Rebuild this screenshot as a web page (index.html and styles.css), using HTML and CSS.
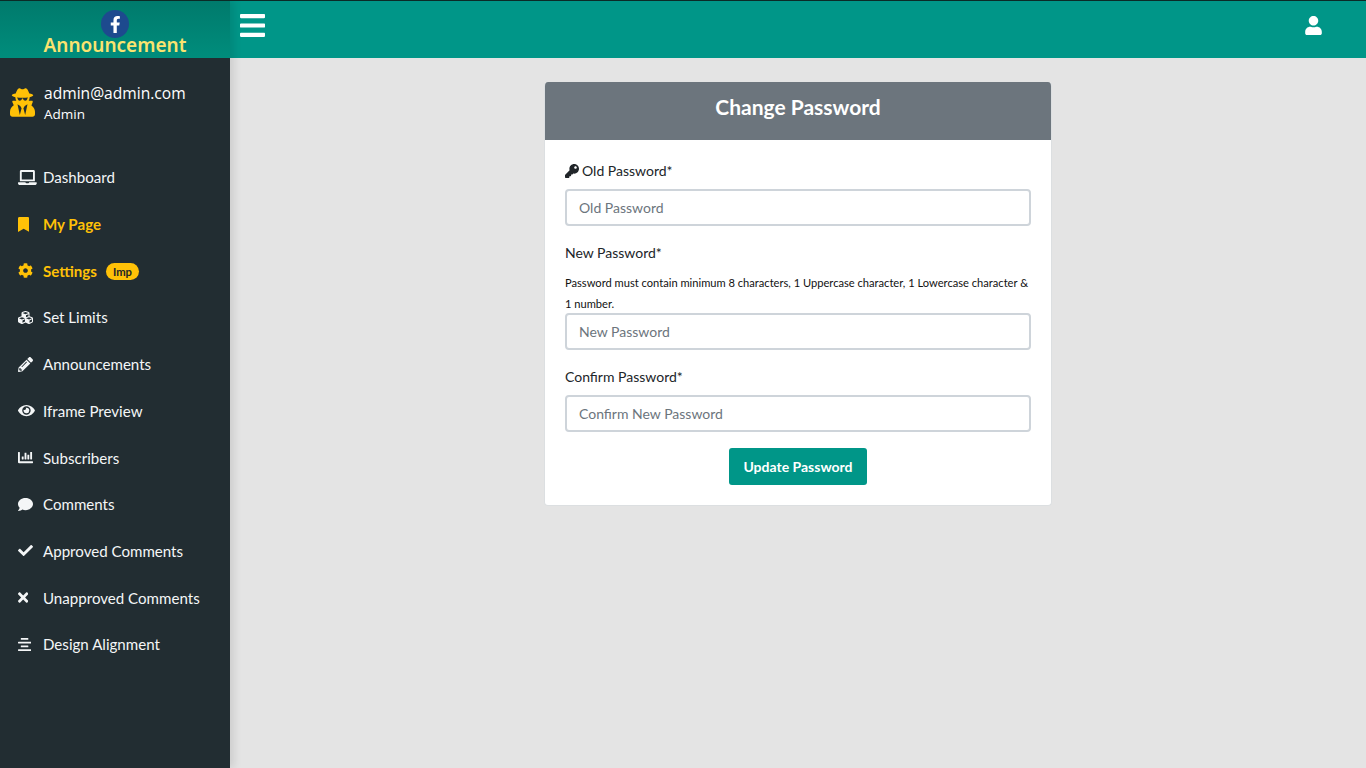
FILE: index.html
```html
<!DOCTYPE html>
<html lang="en">
<head>
<meta charset="utf-8">
<title>Change Password</title>
<link rel="stylesheet" href="styles.css">
</head>
<body>
<aside class="sidebar">
  <div class="logo">
    <span class="logo-badge"><svg viewBox="0 0 320 512" class="logo-f"><path d="M279.14 288l14.22-92.66h-88.91v-60.13c0-25.35 12.42-50.06 52.24-50.06h40.42V6.26S260.43 0 225.36 0c-73.22 0-121.08 44.38-121.08 124.72v70.62H22.89V288h81.39v224h100.17V288z"/></svg></span>
    <span class="logo-text">Announcement</span>
  </div>
  <div class="profile">
    <svg viewBox="0 0 448 512" class="profile-icon"><path d="M383.9 308.3l23.9-62.6c4-10.5-3.7-21.7-15-21.7h-58.5c11-18.9 17.8-40.6 17.8-64v-.3c39.2-7.8 64-19.1 64-31.7 0-13.3-27.3-25.1-70.1-33-9.2-32.8-27-65.8-40.6-82.8-9.5-11.9-25.9-15.6-39.5-8.8l-27.6 13.8c-9 4.5-19.6 4.5-28.6 0L182.1 3.4c-13.6-6.8-30-3.1-39.5 8.8-13.5 17-31.4 50-40.6 82.8-42.7 7.9-70 19.7-70 33 0 12.6 24.8 23.9 64 31.7v.3c0 23.4 6.8 45.1 17.8 64H56.3c-11.5 0-19.2 11.7-14.7 22.3l25.8 60.2C27.3 329.8 0 372.7 0 422.4v44.8C0 491.9 20.1 512 44.8 512h358.4c24.7 0 44.8-20.1 44.8-44.8v-44.8c0-48.4-25.8-90.4-64.1-114.1zM176 480l-41.6-192 49.6 32 24 40-32 120zm96 0l-32-120 24-40 49.6-32L272 480zm41.7-298.5c-3.9 11.9-7 24.6-16.5 33.4-10.1 9.3-48 22.4-64-25-2.8-8.4-15.4-8.4-18.3 0-17 50.2-56 32.4-64 25-9.5-8.8-12.7-21.5-16.5-33.4-.8-2.5-6.3-5.7-6.3-5.8v-10.8c28.3 3.6 61 5.8 96 5.8s67.7-2.1 96-5.8v10.8c-.1.1-5.6 3.2-6.4 5.8z"/></svg>
    <div class="profile-text">
      <div class="profile-mail">admin@admin.com</div>
      <div class="profile-role">Admin</div>
    </div>
  </div>
  <nav class="menu">
    <a class="item"><span class="ico"><svg viewBox="0 0 640 512"><path d="M624 416H381.54c-.74 19.81-14.71 32-32.74 32H288c-18.69 0-33.02-17.47-32.77-32H16c-8.8 0-16 7.2-16 16v16c0 35.2 28.8 64 64 64h512c35.2 0 64-28.8 64-64v-16c0-8.8-7.2-16-16-16zM576 48c0-26.4-21.6-48-48-48H112C85.6 0 64 21.6 64 48v336h512V48zm-64 272H128V64h384v256z"/></svg></span>Dashboard</a>
    <a class="item active"><span class="ico"><svg viewBox="0 0 384 512"><path d="M0 512V48C0 21.49 21.49 0 48 0h288c26.51 0 48 21.49 48 48v464L192 400 0 512z"/></svg></span>My Page</a>
    <a class="item active"><span class="ico"><svg viewBox="0 0 512 512"><path d="M487.4 315.7l-42.6-24.6c4.3-23.2 4.3-47 0-70.2l42.6-24.6c4.9-2.8 7.1-8.6 5.5-14-11.1-35.6-30-67.8-54.7-94.6-3.8-4.1-10-5.1-14.8-2.3L380.8 110c-17.9-15.4-38.5-27.3-60.8-35.1V25.8c0-5.6-3.9-10.5-9.4-11.7-36.7-8.2-74.3-7.8-109.2 0-5.5 1.2-9.4 6.1-9.4 11.7V75c-22.2 7.9-42.8 19.8-60.8 35.1L88.7 85.5c-4.9-2.8-11-1.9-14.8 2.3-24.7 26.7-43.6 58.9-54.7 94.6-1.7 5.4.6 11.2 5.5 14L67.3 221c-4.3 23.2-4.3 47 0 70.2l-42.6 24.6c-4.9 2.8-7.1 8.6-5.5 14 11.1 35.6 30 67.8 54.7 94.6 3.8 4.1 10 5.1 14.8 2.3l42.6-24.6c17.9 15.4 38.5 27.3 60.8 35.1v49.2c0 5.6 3.9 10.5 9.4 11.7 36.7 8.2 74.3 7.8 109.2 0 5.5-1.2 9.4-6.1 9.4-11.7v-49.2c22.2-7.9 42.8-19.8 60.8-35.1l42.6 24.6c4.9 2.8 11 1.9 14.8-2.3 24.7-26.7 43.6-58.9 54.7-94.6 1.5-5.5-.7-11.3-5.6-14.1zM256 336c-44.1 0-80-35.9-80-80s35.9-80 80-80 80 35.9 80 80-35.9 80-80 80z"/></svg></span>Settings<span class="badge">Imp</span></a>
    <a class="item"><span class="ico"><svg viewBox="0 0 512 512"><path d="M488.6 250.2L392 214V105.5c0-15-9.3-28.4-23.4-33.7l-100-37.5c-8.1-3.1-17.1-3.1-25.3 0l-100 37.5c-14.1 5.3-23.4 18.7-23.4 33.7V214l-96.6 36.2C9.3 255.5 0 268.9 0 283.9V394c0 13.6 7.7 26.1 19.9 32.2l100 50c10.1 5.1 22.1 5.1 32.2 0l103.9-52 103.9 52c10.1 5.1 22.1 5.1 32.2 0l100-50c12.2-6.1 19.9-18.6 19.9-32.2V283.9c0-15-9.3-28.4-23.4-33.7zM358 214.8l-85 31.9v-68.2l85-37v73.3zM154 104.1l102-38.2 102 38.2v.6l-102 41.4-102-41.4v-.6zm84 291.1l-85 42.5v-79.1l85-38.8v75.4zm0-112l-102 41.4-102-41.4v-.6l102-38.2 102 38.2v.6zm240 112l-85 42.5v-79.1l85-38.8v75.4zm0-112l-102 41.4-102-41.4v-.6l102-38.2 102 38.2v.6z"/></svg></span>Set Limits</a>
    <a class="item"><span class="ico"><svg viewBox="0 0 512 512"><path d="M497.9 142.1l-46.1 46.1c-4.7 4.7-12.3 4.7-17 0l-111-111c-4.7-4.7-4.7-12.3 0-17l46.1-46.1c18.7-18.7 49.1-18.7 67.9 0l60.1 60.1c18.8 18.7 18.8 49.1 0 67.9zM284.2 99.8L21.6 362.4.4 483.9c-2.9 16.4 11.4 30.6 27.8 27.8l121.5-21.3 262.6-262.6c4.7-4.7 4.7-12.3 0-17l-111-111c-4.8-4.7-12.4-4.7-17.1 0zM124.1 339.9c-5.5-5.5-5.5-14.3 0-19.8l154-154c5.5-5.5 14.3-5.5 19.8 0s5.5 14.3 0 19.8l-154 154c-5.5 5.5-14.3 5.5-19.8 0zM88 424h48v36.3l-64.5 11.3-31.1-31.1L51.7 376H88v48z"/></svg></span>Announcements</a>
    <a class="item"><span class="ico"><svg viewBox="0 0 576 512"><path d="M572.52 241.4C518.29 135.59 410.93 64 288 64S57.68 135.64 3.48 241.41a32.35 32.35 0 0 0 0 29.19C57.71 376.41 165.07 448 288 448s230.32-71.64 284.52-177.41a32.35 32.35 0 0 0 0-29.19zM288 400a144 144 0 1 1 144-144 143.93 143.93 0 0 1-144 144zm0-240a95.31 95.31 0 0 0-25.31 3.79 47.85 47.85 0 0 1-66.9 66.9A95.78 95.78 0 1 0 288 160z"/></svg></span>Iframe Preview</a>
    <a class="item"><span class="ico"><svg viewBox="0 0 512 512"><path d="M332.8 320h38.4c6.4 0 12.8-6.4 12.8-12.8V172.8c0-6.4-6.4-12.8-12.8-12.8h-38.4c-6.4 0-12.8 6.4-12.8 12.8v134.4c0 6.4 6.4 12.8 12.8 12.8zm96 0h38.4c6.4 0 12.8-6.4 12.8-12.8V76.8c0-6.4-6.4-12.8-12.8-12.8h-38.4c-6.4 0-12.8 6.4-12.8 12.8v230.4c0 6.4 6.4 12.8 12.8 12.8zm-288 0h38.4c6.4 0 12.8-6.4 12.8-12.8v-70.4c0-6.4-6.4-12.8-12.8-12.8h-38.4c-6.4 0-12.8 6.4-12.8 12.8v70.4c0 6.4 6.4 12.8 12.8 12.8zm96 0h38.4c6.4 0 12.8-6.4 12.8-12.8V108.8c0-6.4-6.4-12.8-12.8-12.8h-38.4c-6.4 0-12.8 6.4-12.8 12.8v198.4c0 6.4 6.4 12.8 12.8 12.8zM496 384H64V80c0-8.84-7.16-16-16-16H16C7.16 64 0 71.16 0 80v336c0 17.67 14.33 32 32 32h464c8.84 0 16-7.16 16-16v-32c0-8.84-7.16-16-16-16z"/></svg></span>Subscribers</a>
    <a class="item"><span class="ico"><svg viewBox="0 0 512 512"><path d="M256 32C114.6 32 0 125.1 0 240c0 49.6 21.4 95 57 130.7C44.5 421.1 2.7 466 2.2 466.5c-2.2 2.3-2.8 5.7-1.5 8.7S4.8 480 8 480c66.3 0 116-31.8 140.6-51.4 32.7 12.3 69 19.4 107.4 19.4 141.4 0 256-93.1 256-208S397.4 32 256 32z"/></svg></span>Comments</a>
    <a class="item"><span class="ico"><svg viewBox="0 0 512 512"><path d="M173.898 439.404l-166.4-166.4c-9.997-9.997-9.997-26.206 0-36.204l36.203-36.204c9.997-9.998 26.207-9.998 36.204 0L192 312.69 432.095 72.596c9.997-9.997 26.207-9.997 36.204 0l36.203 36.204c9.997 9.997 9.997 26.206 0 36.204l-294.4 294.401c-9.998 9.997-26.207 9.997-36.204-.001z"/></svg></span>Approved Comments</a>
    <a class="item"><span class="ico"><svg viewBox="0 0 352 512"><path d="M242.72 256l100.07-100.07c12.28-12.28 12.28-32.19 0-44.48l-22.24-22.24c-12.28-12.28-32.19-12.28-44.48 0L176 189.28 75.93 89.21c-12.28-12.28-32.19-12.28-44.48 0L9.21 111.45c-12.28 12.28-12.28 32.19 0 44.48L109.28 256 9.21 356.07c-12.28 12.28-12.28 32.19 0 44.48l22.24 22.24c12.28 12.28 32.2 12.28 44.48 0L176 322.72l100.07 100.07c12.28 12.28 32.2 12.28 44.48 0l22.24-22.24c12.28-12.28 12.28-32.19 0-44.48L242.72 256z"/></svg></span>Unapproved Comments</a>
    <a class="item"><span class="ico"><svg viewBox="0 0 448 512"><path d="M432 160H16a16 16 0 0 0-16 16v32a16 16 0 0 0 16 16h416a16 16 0 0 0 16-16v-32a16 16 0 0 0-16-16zm0 256H16a16 16 0 0 0-16 16v32a16 16 0 0 0 16 16h416a16 16 0 0 0 16-16v-32a16 16 0 0 0-16-16zM108.1 96h231.81A12.09 12.09 0 0 0 352 83.9V44.09A12.09 12.09 0 0 0 339.91 32H108.1A12.09 12.09 0 0 0 96 44.09V83.9A12.1 12.1 0 0 0 108.1 96zm231.81 256A12.09 12.09 0 0 0 352 339.9v-39.81A12.09 12.09 0 0 0 339.91 288H108.1A12.09 12.09 0 0 0 96 300.09v39.81a12.1 12.1 0 0 0 12.1 12.1z"/></svg></span>Design Alignment</a>
  </nav>
</aside>
<div class="content">
  <header class="topbar">
    <svg viewBox="0 60 448 392" preserveAspectRatio="none" class="bars"><path d="M16 132h416c8.837 0 16-7.163 16-16V76c0-8.837-7.163-16-16-16H16C7.163 60 0 67.163 0 76v40c0 8.837 7.163 16 16 16zm0 160h416c8.837 0 16-7.163 16-16v-40c0-8.837-7.163-16-16-16H16c-8.837 0-16 7.163-16 16v40c0 8.837 7.163 16 16 16zm0 160h416c8.837 0 16-7.163 16-16v-40c0-8.837-7.163-16-16-16H16c-8.837 0-16 7.163-16 16v40c0 8.837 7.163 16 16 16z"/></svg>
    <svg viewBox="0 0 448 512" class="user"><path d="M224 256c70.7 0 128-57.3 128-128S294.7 0 224 0 96 57.3 96 128s57.3 128 128 128zm89.6 32h-16.7c-22.2 10.2-46.9 16-72.9 16s-50.6-5.8-72.9-16h-16.7C60.2 288 0 348.2 0 422.4V464c0 26.5 21.5 48 48 48h352c26.5 0 48-21.5 48-48v-41.6c0-74.2-60.2-134.4-134.4-134.4z"/></svg>
  </header>
  <main class="main">
    <section class="card">
      <h1 class="card-head">Change Password</h1>
      <form class="card-body">
        <label class="field-label label-first"><svg viewBox="0 0 512 512" class="key"><path d="M512 176.001C512 273.203 433.202 352 336 352c-11.22 0-22.19-1.062-32.827-3.069l-24.012 27.014A23.999 23.999 0 0 1 261.223 384H224v40c0 13.255-10.745 24-24 24h-40v40c0 13.255-10.745 24-24 24H24c-13.255 0-24-10.745-24-24v-78.059c0-6.365 2.529-12.47 7.029-16.971l161.802-161.802C163.108 213.814 160 195.271 160 176 160 78.798 238.797.001 335.999 0 433.488-.001 512 78.511 512 176.001zM336 128c0 26.51 21.49 48 48 48s48-21.49 48-48-21.49-48-48-48-48 21.49-48 48z"/></svg>Old Password*</label>
        <input class="input input-first" type="password" placeholder="Old Password">
        <label class="field-label">New Password*</label>
        <p class="hint">Password must contain minimum 8 characters, 1 Uppercase character, 1 Lowercase character &amp; 1 number.</p>
        <input class="input" type="password" placeholder="New Password">
        <label class="field-label">Confirm Password*</label>
        <input class="input input-first" type="password" placeholder="Confirm New Password">
        <button class="btn" type="button">Update Password</button>
      </form>
    </section>
  </main>
</div>
</body>
</html>
```
FILE: styles.css
```css
* { box-sizing: border-box; }
html, body { margin: 0; height: 100%; }
body {
  display: flex;
  height: 768px;
  overflow: hidden;
  font-family: "Lato", sans-serif;
  background: #e4e4e4;
  color: #212529;
}
.sidebar {
  width: 230px;
  flex: none;
  background: #222d32;
  box-shadow: 4px 0 8px rgba(0, 0, 0, 0.1);
  position: relative;
  z-index: 1;
}
.logo {
  height: 58px;
  border-top: 1px solid #0b2b27;
  background: linear-gradient(to bottom, #007a6c, #008d7c);
  display: flex;
  flex-direction: column;
  align-items: center;
  padding-top: 9px;
}
.logo-badge {
  width: 28px;
  height: 28px;
  border-radius: 50%;
  background: #1d4a8e;
  display: flex;
  align-items: center;
  justify-content: center;
}
.logo-f { height: 17px; fill: #fff; }
.logo-text {
  font-family: "Noto Sans", sans-serif;
  font-weight: 600;
  font-size: 19px;
  line-height: 19px;
  margin-top: -2px;
  color: #fbe36f;
}
.profile {
  display: flex;
  align-items: flex-start;
  gap: 9px;
  padding: 23px 0 0 10px;
  height: 96px;
}
.profile-icon { width: 25px; height: 29px; fill: #ffc107; flex: none; margin-top: 7px; }
.profile-text { color: #fff; }
.profile-mail { font-family: "Open Sans", sans-serif; font-size: 15.6px; line-height: 24px; }
.profile-role { font-family: "Open Sans", sans-serif; font-size: 13.5px; line-height: 18px; }
.menu { display: flex; flex-direction: column; }
.item {
  display: flex;
  align-items: center;
  height: 46.71px;
  padding-left: 18px;
  color: #f4f6f7;
  font-size: 15.1px;
}
.item.active { color: #ffc107; font-weight: 700; }
.ico { width: 25px; flex: none; display: flex; align-items: center; }
.ico svg { height: 15px; max-width: 19px; fill: currentColor; display: block; }
.badge {
  margin-left: 9px;
  background: #ffc107;
  color: #212529;
  font-size: 11.25px;
  font-weight: 700;
  line-height: 17px;
  padding: 0 7px;
  border-radius: 9px;
  margin-top: 2px;
}
.content { flex: 1; display: flex; flex-direction: column; min-width: 0; }
.topbar {
  height: 58px;
  border-top: 1px solid #0b2b27;
  background: #009688;
  display: flex;
  align-items: center;
  justify-content: space-between;
  padding: 0 44px 0 10px;
  flex: none;
}
.bars { width: 25px; height: 23px; fill: #fff; margin-top: -8px; }
.user { width: 17px; height: 19px; fill: #fff; margin-top: -8px; }
.main { flex: 1; display: flex; justify-content: center; align-items: flex-start; padding-top: 24px; }
.card {
  width: 508px;
  background: #fff;
  border: 1px solid #dcdfe1;
  border-top: 0;
  border-radius: 4px;
  overflow: hidden;
}
.card-head {
  margin: 0;
  height: 58px;
  background: #6c757d;
  color: #fff;
  font-size: 21px;
  font-weight: 700;
  line-height: 50px;
  text-align: center;
}
.card-body { display: flex; flex-direction: column; padding: 20px 20px 20px; }
.field-label { font-size: 14px; line-height: 22px; color: #212529; display: block; }
.key { width: 14px; height: 14px; margin-right: 3px; fill: #212529; vertical-align: -2px; }
.hint { margin: 8px 0 -1px; font-size: 11.13px; line-height: 21px; color: #111; }
.input {
  display: block;
  width: 100%;
  height: 37px;
  border: 2px solid #ced4da;
  border-radius: 4px;
  padding: 0 12px;
  font: 14px "Lato", sans-serif;
  background: #fff;
  margin-bottom: 16px;
}
.input-first { margin-top: 7px; }
.input::placeholder { color: #6c757d; opacity: 1; }
.btn {
  align-self: center;
  width: 138px;
  height: 37px;
  background: #009688;
  color: #fff;
  border: 0;
  border-radius: 3px;
  font: 700 14px "Lato", sans-serif;
}
```
